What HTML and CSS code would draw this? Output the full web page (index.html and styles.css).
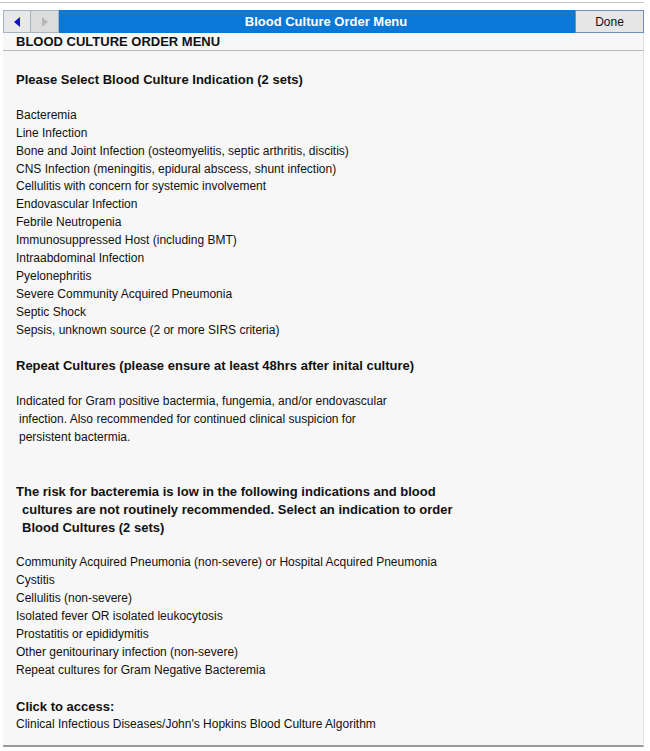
FILE: index.html
```html
<!DOCTYPE html>
<html lang="en">
<head>
  <meta charset="UTF-8" />
  <title>Blood Culture Order Menu</title>
  <link rel="stylesheet" href="styles.css">
</head>
<body>

<div class="window">
  <div class="titlebar">
    <div class="nav">
      <button class="nav-btn"><span class="arrow back"></span></button>
      <button class="nav-btn" disabled><span class="arrow fwd"></span></button>
    </div>
    <div class="title">Blood Culture Order Menu</div>
    <button class="done">Done</button>
  </div>

  <div class="subheader">BLOOD CULTURE ORDER MENU</div>

  <div class="content">
    <p class="head">Please Select Blood Culture Indication (2 sets)</p>
    <ul class="options">
      <li>Bacteremia</li>
      <li>Line Infection</li>
      <li>Bone and Joint Infection (osteomyelitis, septic arthritis, discitis)</li>
      <li>CNS Infection (meningitis, epidural abscess, shunt infection)</li>
      <li>Cellulitis with concern for systemic involvement</li>
      <li>Endovascular Infection</li>
      <li>Febrile Neutropenia</li>
      <li>Immunosuppressed Host (including BMT)</li>
      <li>Intraabdominal Infection</li>
      <li>Pyelonephritis</li>
      <li>Severe Community Acquired Pneumonia</li>
      <li>Septic Shock</li>
      <li>Sepsis, unknown source (2 or more SIRS criteria)</li>
    </ul>

    <p class="head">Repeat Cultures (please ensure at least 48hrs after inital culture)</p>
    <p class="note">
      <span>Indicated for Gram positive bactermia, fungemia, and/or endovascular</span>
      <span class="indent">infection. Also recommended for continued clinical suspicion for</span>
      <span class="indent">persistent bactermia.</span>
    </p>

    <p class="head warn">
      <span>The risk for bacteremia is low in the following indications and blood</span>
      <span class="indent">cultures are not routinely recommended. Select an indication to order</span>
      <span class="indent">Blood Cultures (2 sets)</span>
    </p>
    <ul class="options">
      <li>Community Acquired Pneumonia (non-severe) or Hospital Acquired Pneumonia</li>
      <li>Cystitis</li>
      <li>Cellulitis (non-severe)</li>
      <li>Isolated fever OR isolated leukocytosis</li>
      <li>Prostatitis or epididymitis</li>
      <li>Other genitourinary infection (non-severe)</li>
      <li>Repeat cultures for Gram Negative Bacteremia</li>
    </ul>

    <p class="head link-head">Click to access:</p>
    <p class="link">Clinical Infectious Diseases/John's Hopkins Blood Culture Algorithm</p>
  </div>
</div>

</body>
</html>
```

FILE: styles.css
```css
body {
  margin: 0;
  background: #fff;
  font-family: "Liberation Sans", Arial, sans-serif;
  font-size: 12px;
  color: #111;
}
.window {
  width: 641px;
  margin-top: 2px;
  padding-top: 7px;
  padding-left: 3px;
  border-top: 1px solid #c4c4c4;
}
.titlebar {
  display: flex;
  align-items: stretch;
  height: 23px;
  background: #0a78d6;
}
.nav {
  display: flex;
}
.nav-btn {
  width: 28px;
  margin: 0;
  padding: 0;
  background: #e8e8e8;
  border: 1px solid #a8b4c4;
  display: flex;
  align-items: center;
  justify-content: center;
}
.nav-btn + .nav-btn {
  background: #dcdcdc;
  border-left: none;
}
.arrow {
  width: 0;
  height: 0;
  border-top: 5px solid transparent;
  border-bottom: 5px solid transparent;
}
.arrow.back {
  border-right: 6px solid #1010c8;
}
.arrow.fwd {
  border-left: 6px solid #b8b8b8;
}
.title {
  flex: 1;
  text-align: center;
  color: #fff;
  font-weight: bold;
  font-size: 13px;
  line-height: 23px;
  padding-left: 18px;
}
.done {
  width: 69px;
  margin: 0;
  padding: 0;
  background: #e6e6e6;
  border: 1px solid #6f8fb8;
  font-family: inherit;
  font-size: 12px;
  color: #111;
}
.subheader {
  height: 17px;
  line-height: 18px;
  padding-left: 13px;
  font-weight: bold;
  font-size: 13px;
  background: #f7f7f7;
  border-bottom: 1px solid #b9b9b9;
  border-right: 1px solid #dedede;
}
.content {
  background: #f7f7f7;
  border-right: 1px solid #e4e4e4;
  border-bottom: 2px solid #9a9a9a;
  padding: 20px 13px 12px 13px;
  line-height: 17.9px;
}
.content p,
.content ul {
  margin: 0;
}
.content ul {
  list-style: none;
  padding: 0;
  margin-bottom: 17.9px;
}
.head {
  font-weight: bold;
  font-size: 13px;
  margin-bottom: 17.9px !important;
}
.note {
  margin-bottom: 35.8px !important;
}
.note span,
.warn span {
  display: block;
}
.note .indent {
  padding-left: 3px;
}
.warn .indent {
  padding-left: 6px;
}
.link-head {
  margin-bottom: 0 !important;
}
```
